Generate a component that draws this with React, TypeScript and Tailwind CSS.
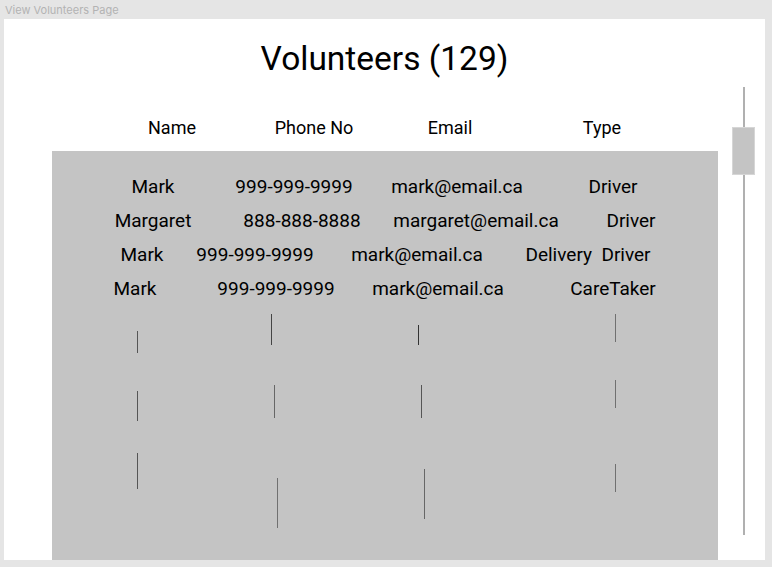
const rows = [
  [
    { text: 'Mark', cls: 'ml-[101px]' },
    { text: '999-999-9999', cls: 'ml-[141px]' },
    { text: 'mark@email.ca', cls: 'ml-[163px]' },
    { text: 'Driver', cls: 'ml-[156px]' },
  ],
  [
    { text: 'Margaret', cls: 'ml-[101px]' },
    { text: '888-888-8888', cls: 'ml-[149px]' },
    { text: 'margaret@email.ca', cls: 'ml-[174px]' },
    { text: 'Driver', cls: 'ml-[155px]' },
  ],
  [
    { text: 'Mark', cls: 'ml-[90px]' },
    { text: '999-999-9999', cls: 'ml-[113px]' },
    { text: 'mark@email.ca', cls: 'ml-[162px]' },
    { text: 'Delivery  Driver', cls: 'ml-[171px]' },
  ],
  [
    { text: 'Mark', cls: 'ml-[83px]' },
    { text: '999-999-9999', cls: 'ml-[141px]' },
    { text: 'mark@email.ca', cls: 'ml-[162px]' },
    { text: 'CareTaker', cls: 'ml-[175px]' },
  ],
];

// little cursor marks sketched in the empty part of the table
const marks = [
  'left-[85px] top-[180px] h-[22px] bg-[#555]',
  'left-[219px] top-[163px] h-[31px] bg-[#444]',
  'left-[366px] top-[174px] h-[20px] bg-[#333]',
  'left-[563px] top-[163px] h-[28px] bg-[#707070]',
  'left-[85px] top-[240px] h-[30px] bg-[#555]',
  'left-[222px] top-[234px] h-[33px] bg-[#666]',
  'left-[369px] top-[234px] h-[33px] bg-[#555]',
  'left-[563px] top-[229px] h-[28px] bg-[#707070]',
  'left-[85px] top-[302px] h-[36px] bg-[#555]',
  'left-[225px] top-[327px] h-[50px] bg-[#707070]',
  'left-[372px] top-[318px] h-[50px] bg-[#666]',
  'left-[563px] top-[313px] h-[28px] bg-[#707070]',
];

const Cell = ({ text, cls }: { text: string; cls: string }) => (
  <span className={`${cls} flex w-0 shrink-0 justify-center whitespace-pre`}>{text}</span>
);

const App = () => {
  return (
    <div className="flex h-[567px] w-full flex-col overflow-hidden bg-[#e5e5e5] font-['Roboto',sans-serif] text-black">
      <div className="h-[19px] pl-[5px] font-['Inter',sans-serif] text-[11px] leading-[20px] text-[#b3b3b3]">
        View Volunteers Page
      </div>
      <div className="relative ml-[4px] mr-[7px] flex h-[541px] flex-col bg-white">
        <h1 className="pt-[19px] text-center text-[33.5px] leading-[42px]">Volunteers (129)</h1>

        <div className="mt-[36px] flex h-[24px] text-[18px] leading-[24px]">
          <Cell text="Name" cls="ml-[168px]" />
          <Cell text="Phone No" cls="ml-[142px]" />
          <Cell text="Email" cls="ml-[136px]" />
          <Cell text="Type" cls="ml-[152px]" />
        </div>

        <div className="relative ml-[48px] mt-[11px] w-[666px] flex-1 bg-[#c4c4c4] pt-[19px] text-[19px]">
          {rows.map((row, i) => (
            <div key={i} className="flex h-[34px] leading-[34px]">
              {row.map((c, j) => (
                <Cell key={j} text={c.text} cls={c.cls} />
              ))}
            </div>
          ))}
          {marks.map((m, i) => (
            <div key={i} className={`absolute w-px ${m}`} />
          ))}
        </div>

        {/* scrollbar */}
        <div className="absolute left-[739px] top-[68px] h-[448px] w-[2px] bg-[#b0b0b0]" />
        <div className="absolute left-[728px] top-[108px] h-[48px] w-[23px] border border-[#d6d6d6] bg-[#c4c4c4]" />
      </div>
    </div>
  );
};

export default App;
